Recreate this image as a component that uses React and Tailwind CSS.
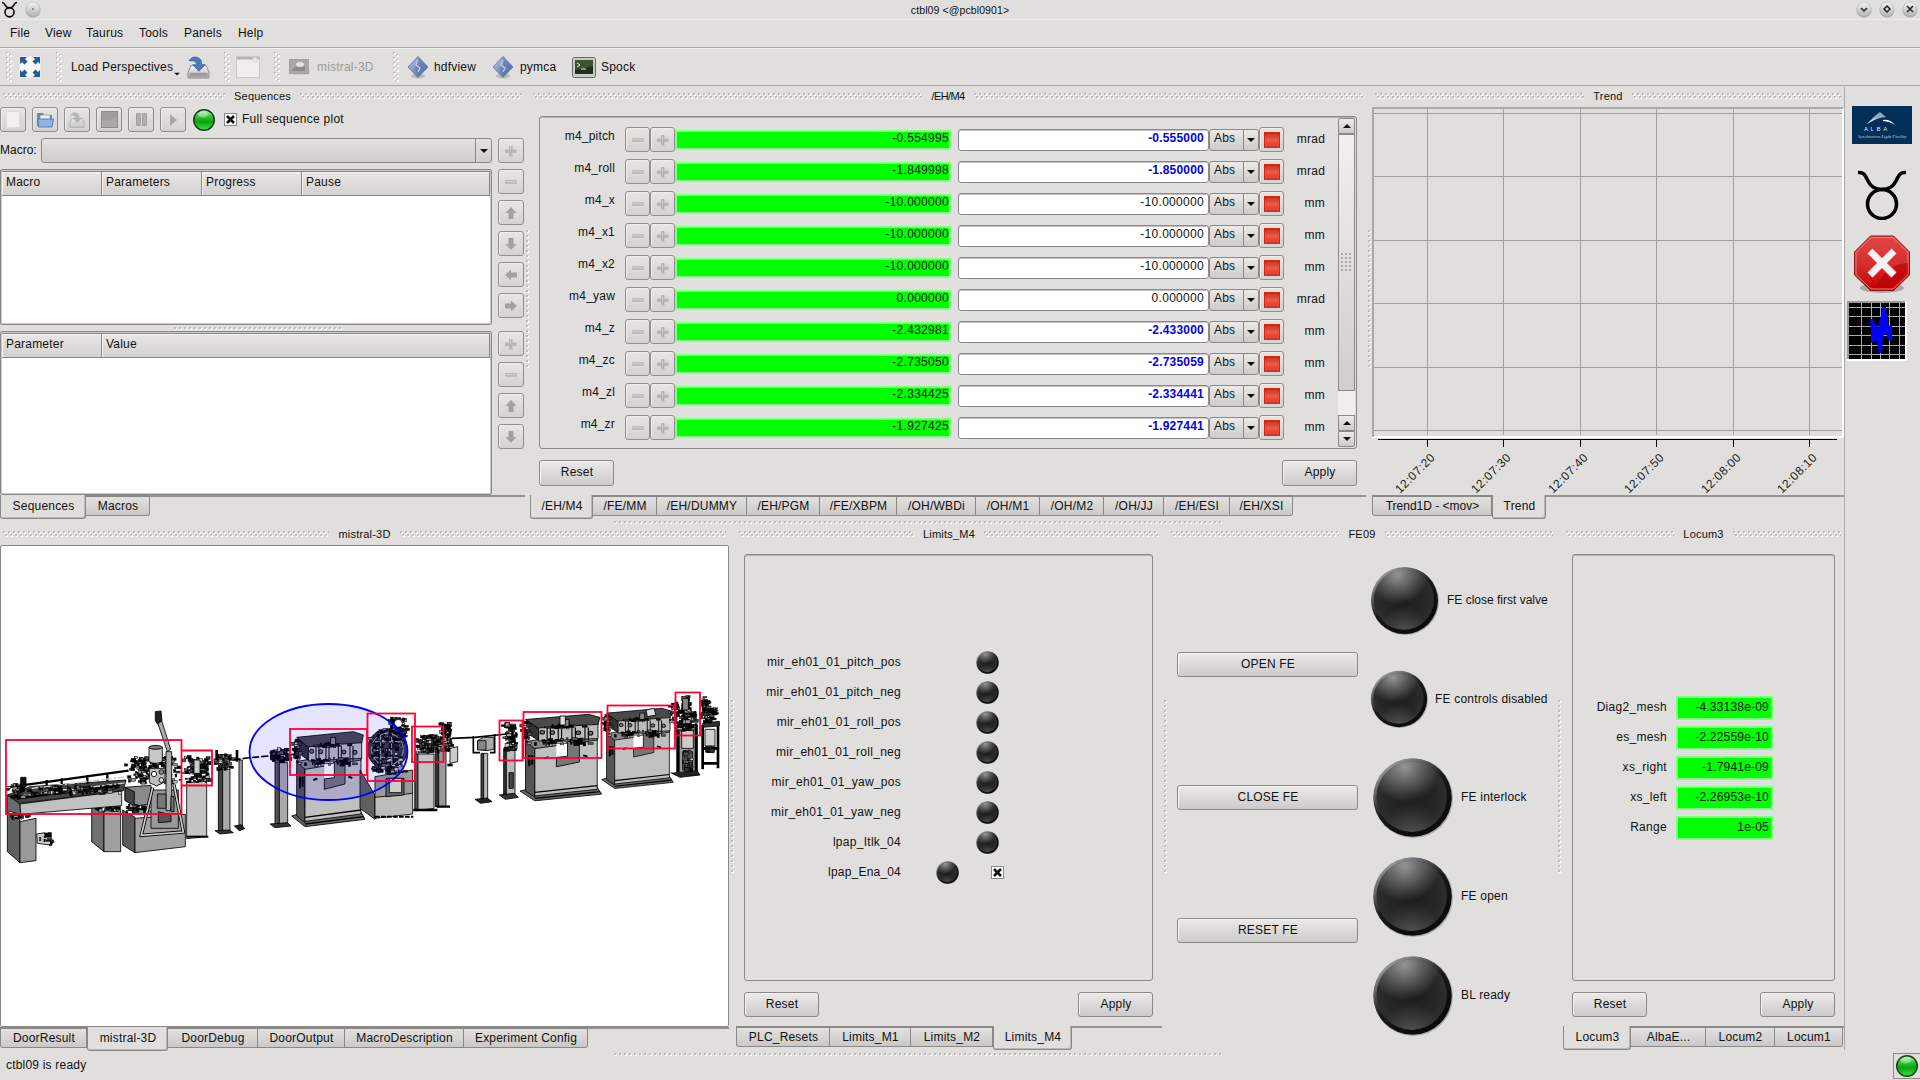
import React from "react";

/* ---------- shared patterns ---------- */
function Patterns() {
  return (
    <svg width="0" height="0" className="absolute">
      <defs>
        <pattern id="zig" width="5" height="6" patternUnits="userSpaceOnUse">
          <rect x="0" y="0" width="2" height="2" fill="#bab9b7" />
          <rect x="1" y="1" width="2" height="2" fill="#fff" />
          <rect x="1" y="1" width="1" height="1" fill="#d0cfcd" />
          <rect x="2" y="3" width="2" height="2" fill="#bab9b7" />
          <rect x="3" y="4" width="2" height="2" fill="#fff" />
          <rect x="3" y="4" width="1" height="1" fill="#d0cfcd" />
        </pattern>
        <pattern id="dot" width="5" height="5" patternUnits="userSpaceOnUse">
          <rect x="0" y="0" width="2" height="2" fill="#bab9b7" />
          <rect x="1" y="1" width="2" height="2" fill="#fff" />
          <rect x="1" y="1" width="1" height="1" fill="#c6c5c3" />
        </pattern>
        <pattern id="grip" width="6" height="5" patternUnits="userSpaceOnUse">
          <rect x="0" y="0" width="2" height="2" fill="#c2c1bf" />
          <rect x="1" y="1" width="2" height="2" fill="#fff" />
          <rect x="3" y="2" width="2" height="2" fill="#c2c1bf" />
          <rect x="4" y="3" width="2" height="2" fill="#fff" />
        </pattern>
        <radialGradient id="ledDark" cx="0.5" cy="0.5" r="0.5">
          <stop offset="0" stopColor="#1c1c1c" />
          <stop offset="0.7" stopColor="#262626" />
          <stop offset="1" stopColor="#2e2e2e" />
        </radialGradient>
        <radialGradient id="ledShine" cx="0.4" cy="0.08" r="0.5">
          <stop offset="0" stopColor="#fff" stopOpacity="0.5" />
          <stop offset="1" stopColor="#fff" stopOpacity="0" />
        </radialGradient>
        <radialGradient id="ledLow" cx="0.5" cy="1" r="0.4">
          <stop offset="0" stopColor="#fff" stopOpacity="0.16" />
          <stop offset="1" stopColor="#fff" stopOpacity="0" />
        </radialGradient>
        <linearGradient id="ledRim" x1="0.15" y1="0" x2="0.7" y2="0.8">
          <stop offset="0" stopColor="#b4b4b6" />
          <stop offset="0.35" stopColor="#55565a" />
          <stop offset="0.6" stopColor="#1a1a1a" />
          <stop offset="1" stopColor="#0c0c0c" />
        </linearGradient>
        <linearGradient id="green" x1="0" y1="0" x2="0" y2="1">
          <stop offset="0" stopColor="#b6f5b6" />
          <stop offset="0.3" stopColor="#2fc92f" />
          <stop offset="0.6" stopColor="#0f9f14" />
          <stop offset="1" stopColor="#2fe43a" />
        </linearGradient>
        <linearGradient id="diamond" x1="0" y1="0" x2="1" y2="1">
          <stop offset="0" stopColor="#c3d0e8" />
          <stop offset="0.5" stopColor="#7d92c4" />
          <stop offset="1" stopColor="#4c639c" />
        </linearGradient>
        <linearGradient id="metal" x1="0" y1="0" x2="0" y2="1">
          <stop offset="0" stopColor="#f4f4f4" />
          <stop offset="1" stopColor="#b5b5b5" />
        </linearGradient>
        <linearGradient id="octa" x1="0" y1="0" x2="0" y2="1">
          <stop offset="0" stopColor="#e04848" />
          <stop offset="0.5" stopColor="#d52f2f" />
          <stop offset="1" stopColor="#c40000" />
        </linearGradient>
      </defs>
    </svg>
  );
}

function Fill({ id, className }) {
  return (
    <svg className={className}>
      <rect width="100%" height="100%" fill={`url(#${id})`} />
    </svg>
  );
}

function VSplit({ className, dots }) {
  return (
    <div className={`flex shrink-0 justify-center ${className}`}>
      <Fill id="dot" className={dots} />
    </div>
  );
}

const GRAD = "bg-linear-to-b from-[#ebeae9] to-[#cccbc9]";
const EDGE = "border border-[#8a8988]";

function Title({ children, textClass = "" }) {
  return (
    <div className="flex h-[18px] shrink-0 items-center gap-[9px] px-[3px]">
      <Fill id="zig" className="h-[6px] min-w-0 flex-1" />
      <span className={`text-[11px] leading-[14px] ${textClass}`}>{children}</span>
      <Fill id="zig" className="h-[6px] min-w-0 flex-1" />
    </div>
  );
}

function PushButton({ children, className = "h-[25px] w-[75px]" }) {
  return (
    <button className={`flex shrink-0 items-center justify-center rounded-[3px] ${EDGE} ${GRAD} pb-[1px] pl-[1px] text-[12px] shadow-[inset_1px_1px_0_#f6f5f4] ${className}`}>
      {children}
    </button>
  );
}

function SmallButton({ children, className = "w-[26px]" }) {
  return (
    <button className={`flex h-[25px] shrink-0 items-center justify-center rounded-[3px] border border-[#8f8e8d] bg-linear-to-b from-[#e6e5e4] to-[#d4d3d1] shadow-[inset_1px_1px_0_#eeedec] ${className}`}>
      {children}
    </button>
  );
}

const Minus = () => (
  <svg width="12" height="12" viewBox="0 0 12 12">
    <rect x="0" y="4" width="12" height="4" rx="1" fill="#bdbcbb" />
    <rect x="1" y="5" width="10" height="1" fill="#cfcecd" />
  </svg>
);
const Plus = () => (
  <svg width="12" height="12" viewBox="0 0 12 12">
    <path d="M4 1h3.500v3.500h4v3.500h-4v3.500h-3.500v-3.500h-4v-3.500h4z" fill="#b7b6b5" />
    <path d="M5 2h1v4h-1z" fill="#cfcecd" />
  </svg>
);
function Arrow({ turn = "" }) {
  return (
    <svg width="14" height="14" viewBox="0 0 14 14" className={turn}>
      <path d="M7 1 12.500 7H9.500V13H4.500V7H1.500Z" fill="#a2a1a0" />
    </svg>
  );
}
const Caret = ({ up }) => (
  <svg width="8" height="4" viewBox="0 0 8 4" className="shrink-0">
    <path d={up ? "M0 4 4 0 8 4Z" : "M0 0H8L4 4Z"} fill="#111" />
  </svg>
);

function Check() {
  return (
    <span className="flex size-[13px] shrink-0 items-center justify-center border border-[#8a8988] bg-white">
      <svg width="9" height="9" viewBox="0 0 9 9">
        <path d="M1 1 8 8M8 1 1 8" stroke="#111" strokeWidth="2.600" />
      </svg>
    </span>
  );
}

function GreenLed() {
  return (
    <svg width="22" height="22" viewBox="0 0 22 22" className="shrink-0">
      <circle cx="11" cy="11" r="11" fill="#1d3a1d" />
      <circle cx="11" cy="11" r="9.500" fill="url(#green)" />
      <ellipse cx="10" cy="5.500" rx="5" ry="3" fill="#fff" opacity="0.35" />
    </svg>
  );
}

function DarkLed({ className }) {
  return (
    <svg viewBox="0 0 100 100" className={`shrink-0 ${className}`}>
      <circle cx="51" cy="51" r="49" fill="#777" opacity="0.5" />
      <circle cx="50" cy="50" r="48.500" fill="url(#ledRim)" />
      <circle cx="49" cy="49" r="43.500" fill="url(#ledDark)" />
      <circle cx="49" cy="49" r="43.500" fill="url(#ledShine)" />
      <circle cx="49" cy="49" r="43.500" fill="url(#ledLow)" />
    </svg>
  );
}

/* ---------- tabs ---------- */
function Tabs({ items, active }) {
  const at = items.findIndex((t) => t[0] === active);
  return (
    <div className="flex h-[24px] shrink-0 items-start text-[12px]">
      {items.map(([name, w], i) =>
        i === at ? (
          <div key={name} className={`flex h-[24px] shrink-0 items-center justify-center rounded-b-[3px] border-x border-b border-[#8a8988] pb-[1px] pl-[1px] shadow-[inset_-1px_-1px_0_#b9b8b6] ${w}`}>
            {name}
          </div>
        ) : (
          <div key={name} className={`flex h-[21px] shrink-0 items-center justify-center border-t-2 border-r border-b border-[#8a8988] bg-linear-to-b from-[#e2e1e0] to-[#cac9c7] pt-[1px] pl-[1px] ${i === 0 ? "rounded-bl-[3px] border-l" : ""} ${i === items.length - 1 ? "rounded-br-[3px]" : ""} ${w}`}>
            {name}
          </div>
        )
      )}
      <div className="h-[2px] flex-1 bg-[#959493]" />
    </div>
  );
}

/* ---------- toolbar icons ---------- */
const FullIcon = () => (
  <svg width="22" height="22" viewBox="0 0 22 22">
    <rect x="0.500" y="0.500" width="21" height="21" fill="#f6f8fb" stroke="#e8e8e8" />
    <path d="M1 1h7l-2 2 2.500 2.500-3 3L3 6 1 8zM21 1v7l-2-2-2.500 2.500-3-3L16 3l-2-2zM1 21v-7l2 2 2.500-2.500 3 3L6 19l2 2zM21 21h-7l2-2-2.500-2.500 3-3L19 16l2-2z" fill="#2a5796" />
  </svg>
);
const SaveIcon = ({ gray, className }) => (
  <svg viewBox="0 0 24 24" className={className}>
    <path d="M4 10h16l3 7v5q0 1-1 1H2q-1 0-1-1v-5z" fill="url(#metal)" stroke="#8c8c8c" />
    <rect x="2.500" y="17.500" width="19" height="4" fill={gray ? "#cfcfcf" : "#9c9c9c"} />
    <path d="M2 5Q6 -1 12 2Q16 4 15 9H19L12.500 16 6 9h4Q10 4 2 5Z" fill={gray ? "#a5a5a5" : "#4c7cb8"} stroke={gray ? "#999" : "#2d5a94"} strokeWidth="0.700" />
  </svg>
);
const Diamond = () => (
  <svg width="22" height="23" viewBox="0 0 22 23">
    <ellipse cx="11" cy="20" rx="7" ry="2.500" fill="#bbb" />
    <path d="M11 0.500 21 11 11 21.500 1 11Z" fill="url(#diamond)" stroke="#6c7fa9" />
    <path d="M11 1 21 11 11 21 8 13Z" fill="#5d72a8" opacity="0.5" />
    <path d="M11 4 9 9 13 12 11 16" stroke="#c4d0e8" strokeWidth="1.200" fill="none" />
  </svg>
);
const TermIcon = () => (
  <svg width="24" height="21" viewBox="0 0 24 21">
    <rect x="0.500" y="0.500" width="23" height="20" rx="2" fill="#c9cac7" stroke="#6a6c68" />
    <rect x="3" y="3" width="18" height="14" fill="#1e3016" />
    <path d="M3 3h18v6L3 13z" fill="#3b5531" />
    <path d="M5 6l3 2-3 2M9 12h5" stroke="#e4f2dc" fill="none" />
  </svg>
);
const WindowIcon = () => (
  <svg width="24" height="22" viewBox="0 0 24 22">
    <rect x="0.500" y="0.500" width="23" height="21" fill="#efeeed" stroke="#cccbca" />
    <rect x="1" y="1" width="22" height="2.500" fill="#b3b2b1" />
    <circle cx="19" cy="4" r="2.500" fill="#e9e8e8" stroke="#dadada" />
  </svg>
);
const ImageIcon = () => (
  <svg width="22" height="18" viewBox="0 0 22 18">
    <path d="M4 15 21 12V16L18 17H4z" fill="#cfcecd" />
    <rect x="0.500" y="1.500" width="19" height="14" fill="#a9a8a7" stroke="#a3a2a1" />
    <path d="M3 11 8 8 16 8V13H3z" fill="#8d8c8b" />
    <ellipse cx="11" cy="6.500" rx="4" ry="2.500" fill="#e6e6e6" />
  </svg>
);
const Taurus = ({ className, w = 3 }) => (
  <svg viewBox="0 0 48 50" className={className} fill="none" stroke="#000" strokeWidth={w}>
    <circle cx="24" cy="34" r="14.500" />
    <path d="M0 2.500C6 2 7 5 10 11C13 17 17 19.500 24 19.500C31 19.500 35 17 38 11C41 5 42 2 48 2.500" />
  </svg>
);
const Grip = ({ className }) => <Fill id="grip" className={`h-[30px] w-[6px] shrink-0 ${className}`} />;

function WinDot({ children }) {
  return (
    <svg width="16" height="17" viewBox="0 0 16 17">
      <circle cx="8" cy="9" r="7.500" fill="#a9a8a6" />
      <circle cx="8" cy="8" r="7" fill="url(#metal)" stroke="#bbb" strokeWidth="0.600" />
      {children}
    </svg>
  );
}

/* ---------- header bars ---------- */
function Header() {
  return (
    <>
      <div className="grid h-[20px] shrink-0 grid-cols-3 items-center border-b border-[#f0efee]">
        <div className="flex items-center gap-[8px] pl-[2px]">
          <Taurus className="h-[17px] w-[15px]" w={5} />
          <WinDot><circle cx="8" cy="8" r="1" fill="#777" /></WinDot>
        </div>
        <div className="text-center text-[10.500px] leading-[14px] tracking-[0.1px]">{"ctbl09 <@pcbl0901>"}</div>
        <div className="flex justify-end gap-[7px] pr-[2px]">
          <WinDot><path d="M5 7l3 3 3-3" stroke="#222" strokeWidth="1.500" fill="none" /></WinDot>
          <WinDot><path d="M8 5l3 3-3 3-3-3z" stroke="#222" strokeWidth="1.500" fill="none" /></WinDot>
          <WinDot><path d="M5 5l6 6M11 5l-6 6" stroke="#222" strokeWidth="1.500" fill="none" /></WinDot>
        </div>
      </div>
      <div className="flex h-[28px] shrink-0 items-center border-b border-[#a9a8a6] pl-[10px]">
        <span className="w-[35px]">File</span>
        <span className="w-[41px]">View</span>
        <span className="w-[53px]">Taurus</span>
        <span className="w-[45px]">Tools</span>
        <span className="w-[54px]">Panels</span>
        <span>Help</span>
      </div>
      <div className="flex h-[38px] shrink-0 items-center border-t border-b border-t-[#f2f1f0] border-b-[#a9a8a6]">
        <Grip className="ml-[6px]" />
        <span className="ml-[7px]"><FullIcon /></span>
        <Grip className="ml-[15px]" />
        <span className="ml-[9px] w-[103px] tracking-[0.2px]">Load Perspectives</span>
        <span className="mt-[14px] -ml-[1px] scale-75"><Caret /></span>
        <SaveIcon className="ml-[6px] size-[23px]" />
        <Grip className="ml-[14px]" />
        <span className="ml-[6px]"><WindowIcon /></span>
        <Grip className="ml-[14px]" />
        <span className="ml-[9px]"><ImageIcon /></span>
        <span className="ml-[6px] w-[76px] text-[#9b9a99]">mistral-3D</span>
        <Grip className="" />
        <span className="ml-[8px]"><Diamond /></span>
        <span className="ml-[5px] w-[58px]">hdfview</span>
        <Diamond />
        <span className="ml-[6px] w-[52px]">pymca</span>
        <TermIcon />
        <span className="ml-[5px]">Spock</span>
      </div>
    </>
  );
}

/* ---------- sequences dock ---------- */
function Table({ cols, className }) {
  return (
    <div className={`flex shrink-0 flex-col rounded-[2px] border border-[#8a8988] bg-white p-px shadow-[inset_0_0_0_1px_#c9c8c7] ${className}`}>
      <div className="flex h-[25px] border-t border-[#8a8988] text-[12px]">
        {cols.map(([n, w]) => (
          <div key={n} className={`flex items-center border-r border-b border-[#8a8988] bg-linear-to-b from-[#e8e7e6] to-[#d3d2d0] pb-[3px] pl-[4px] shadow-[inset_1px_1px_0_#f3f2f1] ${w}`}>
            {n}
          </div>
        ))}
      </div>
    </div>
  );
}

function Sequences() {
  return (
    <div className="flex w-[525px] shrink-0 flex-col">
      <Title>Sequences</Title>
      <div className="mt-[2px] flex h-[25px] shrink-0 items-center">
        <div className="flex gap-[6px]">
          <SmallButton>
            <svg width="14" height="17"><path d="M0.500 0.500H13.500V16.500H0.500Z" fill="#f1f0ef" stroke="#dddcdb" /></svg>
          </SmallButton>
          <SmallButton>
            <svg width="18" height="16" viewBox="0 0 18 16">
              <path d="M1 14V1h6l1 2h8v11z" fill="#6f87a8" />
              <path d="M4 3h10v6H4z" fill="#ededed" stroke="#888" strokeWidth="0.600" />
              <path d="M2 7h15.500L16 15H2.500z" fill="#8fb4df" stroke="#4473aa" strokeWidth="0.800" />
            </svg>
          </SmallButton>
          <SmallButton><SaveIcon gray className="size-[16px] opacity-70" /></SmallButton>
          <SmallButton>
            <svg width="17" height="17"><rect x="0.500" y="0.500" width="16" height="16" fill="#9f9e9d" stroke="#8b8a89" /><path d="M1 16V9Q9 11 16 5V16z" fill="#aaa9a8" /></svg>
          </SmallButton>
          <SmallButton>
            <svg width="11" height="13"><path d="M0.500 0.500H4.500V12.500H0.500ZM6.500 0.500H10.500V12.500H6.500Z" fill="#b0afae" stroke="#a3a2a1" /></svg>
          </SmallButton>
          <SmallButton>
            <svg width="8" height="12"><path d="M1 0 8 6 1 12Z" fill="#a9a8a7" /></svg>
          </SmallButton>
        </div>
        <div className="ml-[7px]"><GreenLed /></div>
        <div className="ml-[9px]"><Check /></div>
        <span className="ml-[5px] tracking-[0.25px]">Full sequence plot</span>
      </div>
      <div className="mt-[6px] flex h-[25px] shrink-0 items-center">
        <span className="w-[41px] tracking-[0px]">Macro:</span>
        <div className={`flex h-[25px] w-[451px] items-stretch rounded-[3px] ${EDGE} bg-linear-to-b from-[#e3e2e1] to-[#cecdcb]`}>
          <div className="flex-1 border-r border-[#8a8988]" />
          <div className="flex w-[15px] items-center justify-center"><Caret /></div>
        </div>
        <div className="ml-[6px]"><SmallButton><Plus /></SmallButton></div>
      </div>
      <div className="mt-[6px] flex h-[156px] shrink-0">
        <Table className="h-[156px] w-[492px]" cols={[["Macro", "w-[100px]"], ["Parameters", "w-[100px]"], ["Progress", "w-[100px]"], ["Pause", "flex-1"]]} />
        <div className="ml-[6px] flex flex-col gap-[6px]">
          <SmallButton><Minus /></SmallButton>
          <SmallButton><Arrow /></SmallButton>
          <SmallButton><Arrow turn="rotate-180" /></SmallButton>
          <SmallButton><Arrow turn="-rotate-90" /></SmallButton>
          <SmallButton><Arrow turn="rotate-90" /></SmallButton>
        </div>
      </div>
      <div className="flex h-[6px] shrink-0 items-center pl-[174px]">
        <Fill id="dot" className="h-[3px] w-[168px]" />
      </div>
      <div className="flex h-[164px] shrink-0">
        <Table className="h-[164px] w-[492px]" cols={[["Parameter", "w-[100px]"], ["Value", "flex-1"]]} />
        <div className="ml-[6px] flex flex-col gap-[6px]">
          <SmallButton><Plus /></SmallButton>
          <SmallButton><Minus /></SmallButton>
          <SmallButton><Arrow /></SmallButton>
          <SmallButton><Arrow turn="rotate-180" /></SmallButton>
        </div>
      </div>
      <Tabs items={[["Sequences", "w-[86px]"], ["Macros", "w-[64px]"]]} active="Sequences" />
    </div>
  );
}

/* ---------- motors dock ---------- */
const MOTORS = [
  ["m4_pitch", "-0.554995", "-0.555000", "mrad", true],
  ["m4_roll", "-1.849998", "-1.850000", "mrad", true],
  ["m4_x", "-10.000000", "-10.000000", "mm", false],
  ["m4_x1", "-10.000000", "-10.000000", "mm", false],
  ["m4_x2", "-10.000000", "-10.000000", "mm", false],
  ["m4_yaw", "0.000000", "0.000000", "mrad", false],
  ["m4_z", "-2.432981", "-2.433000", "mm", true],
  ["m4_zc", "-2.735050", "-2.735059", "mm", true],
  ["m4_zl", "-2.334425", "-2.334441", "mm", true],
  ["m4_zr", "-1.927425", "-1.927441", "mm", true],
];

function Motors() {
  return (
    <div className="flex w-[836px] shrink-0 flex-col">
      <Title textClass="tracking-[-0.6px]">/EH/M4</Title>
      <div className="ml-[9px] mt-[11px] flex h-[333px] w-[818px] shrink-0 rounded-[3px] border border-[#8a8988] shadow-[inset_0_1px_0_#b5b4b2]">
        <div className="flex flex-1 flex-col gap-[7px] pt-[10px]">
          {MOTORS.map(([n, r, w, u, dirty]) => (
            <div key={n} className="flex h-[25px] shrink-0 items-center">
              <span className="w-[75px] pb-[6px] text-right">{n}</span>
              <div className="ml-[10px] flex">
                <SmallButton className="w-[25px]"><Minus /></SmallButton>
                <SmallButton className="w-[25px]"><Plus /></SmallButton>
              </div>
              <div className="flex h-[20px] w-[276px] items-center justify-end border-2 border-[#80ff80] bg-[#00ff00] pb-[2px] tracking-[0.300px]">{r}</div>
              <div className={`ml-[7px] flex h-[22px] w-[251px] items-center justify-end rounded-[3px] border border-[#8a8988] bg-white pb-[2px] pr-[4px] shadow-[inset_0_1px_0_#c5c4c3] ${dirty ? "font-bold text-[#0000f0]" : "tracking-[0.300px]"}`}>{w}</div>
              <div className={`flex h-[22px] w-[50px] items-stretch rounded-[3px] ${EDGE} ${GRAD}`}>
                <span className="flex w-[34px] items-center border-r border-[#8a8988] pb-[2px] pl-[4px]">Abs</span>
                <span className="flex flex-1 items-center justify-center"><Caret /></span>
              </div>
              <SmallButton className="w-[25px]">
                <span className="size-[16px] border border-[#d4231b] bg-linear-to-b from-[#c43200] via-[#ee5a42] to-[#dc3a20]" />
              </SmallButton>
              <span className="w-[41px] pb-[1px] text-right">{u}</span>
            </div>
          ))}
        </div>
        <div className="mr-[1px] mt-[1px] flex h-[329px] w-[17px] flex-col">
          <div className={`flex h-[16px] items-center justify-center rounded-t-[2px] ${EDGE} ${GRAD}`}><Caret up /></div>
          <div className="flex h-[257px] items-center justify-center border border-[#8a8988] bg-linear-to-b from-[#f1f0ef] to-[#cfcecc]">
            <svg width="11" height="20">
              {[0, 4, 8].map((x) => [0, 4, 8, 12, 16].map((y) => <rect key={`${x}-${y}`} x={x} y={y} width="2" height="2" fill="#aaa9a8" />))}
            </svg>
          </div>
          <div className="flex-1 bg-[#efeeed]" />
          <div className={`flex h-[16px] items-center justify-center ${EDGE} ${GRAD}`}><Caret up /></div>
          <div className={`flex h-[16px] items-center justify-center rounded-b-[2px] ${EDGE} ${GRAD}`}><Caret /></div>
        </div>
      </div>
      <div className="ml-[9px] mt-[11px] flex w-[818px] flex-1 justify-between">
        <PushButton className="h-[26px] w-[75px]">Reset</PushButton>
        <PushButton className="h-[26px] w-[75px]">Apply</PushButton>
      </div>
      <Tabs
        active="/EH/M4"
        items={[["/EH/M4", "w-[63px]"], ["/FE/MM", "w-[64px]"], ["/EH/DUMMY", "w-[90px]"], ["/EH/PGM", "w-[73px]"], ["/FE/XBPM", "w-[77px]"], ["/OH/WBDi", "w-[79px]"], ["/OH/M1", "w-[64px]"], ["/OH/M2", "w-[64px]"], ["/OH/JJ", "w-[60px]"], ["/EH/ESI", "w-[66px]"], ["/EH/XSI", "w-[63px]"]]}
      />
    </div>
  );
}

/* ---------- trend dock ---------- */
function Trend() {
  const xs = [[55, "12:07:20"], [131, "12:07:30"], [208, "12:07:40"], [284, "12:07:50"], [361, "12:08:00"], [437, "12:08:10"]];
  return (
    <div className="flex w-[472px] shrink-0 flex-col">
      <Title>Trend</Title>
      <svg width="472" height="388" className="mt-[2px] shrink-0">
        <path d="M471 1V330H0" stroke="#fff" strokeWidth="2" fill="none" />
        <path d="M1 330V1H471" stroke="#a9a8a7" strokeWidth="2" fill="none" />
        {xs.map(([x, t]) => (
          <g key={t}>
            <rect x={x} y="2" width="1" height="326" fill="#a0a0a4" />
            <rect x={x} y="332" width="1" height="8" fill="#000" />
            <text transform={`translate(${x - 27} 387) rotate(-45)`} className="text-[12px]" fill="#222" letterSpacing="0.5">{t}</text>
          </g>
        ))}
        {[6, 69, 133, 196, 260, 323].map((y) => (
          <rect key={y} x="2" y={y} width="468" height="1" fill="#a0a0a4" />
        ))}
        <rect x="6" y="332" width="459" height="1" fill="#000" />
      </svg>
      <Tabs active="Trend" items={[["Trend1D - <mov>", "w-[120px] tracking-[0px]"], ["Trend", "w-[54px]"]]} />
    </div>
  );
}

/* ---------- beamline synoptic ---------- */
function clutter(x, y, w, h, n, seed) {
  let s = seed * 7919 + 17;
  const rnd = () => ((s = (s * 1103515245 + 12345) % 2147483648) / 2147483648);
  const tones = ["#000", "#111", "#000", "#333", "#555", "#999", "#ccc", "#000"];
  return Array.from({ length: n }, (_, i) => {
    const cx = x + w * (0.5 + (rnd() - 0.5) * (0.5 + rnd() * 0.5));
    const cy = y + h * rnd();
    const a = 3 + rnd() * 12;
    const b = 3 + rnd() * 8;
    return <rect key={i} x={cx - a / 2} y={cy - b / 2} width={a} height={b} fill={tones[Math.floor(rnd() * 8)]} stroke="#000" strokeWidth="1.500" />;
  });
}

function Magnet({ transform }) {
  return (
    <g transform={transform}>
      <path d="M875 408 915 440 1095 418 1083 396 900 400Z" fill="#666" />
      <path d="M890 240 915 262V428L890 408Z" fill="#555" />
      <path d="M915 262 1083 235V402L915 424Z" fill="#c0c0c0" />
      <path d="M890 245 925 238 1083 228V240L915 268Z" fill="#888" />
      <path d="M973 252H1003V295H973Z" fill="#fff" stroke="none" />
      <path d="M1003 245 1035 240V312L973 328V297L1003 293Z" fill="#777" />
      <path d="M915 412 1083 390M915 432 1090 410" fill="none" strokeWidth="4" />
      <path d="M890 172 1060 155 1090 165 1085 190 925 202Z" fill="#4a4a4a" />
      <path d="M925 200 1085 188V235L925 243Z" fill="#bcbcbc" />
      {[948, 978, 1015, 1050].map((x) => (
        <path key={x} d={`M${x} 198V242M${x + 9} 198V242`} fill="none" strokeWidth="3" />
      ))}
      {[935, 962, 1032, 1065].map((x, i) => (
        <circle key={x} cx={x} cy={214 + i} r="6" fill="#777" strokeWidth="3" />
      ))}
      <path d="M892 176V215L910 230 925 240V202Z" fill="#333" />
      {clutter(895, 235, 185, 22, 42, 5)}
      {clutter(875, 180, 30, 60, 26, 8)}
      {clutter(900, 192, 185, 8, 24, 9)}
      <path d="M940 300l12 -4M1045 290l12 4M900 290v35M908 290v30" strokeWidth="6" />
      <rect x="992" y="172" width="15" height="22" fill="#888" />
    </g>
  );
}

function Synoptic() {
  return (
    <svg width="727" height="479" viewBox="1 546 727 479">
      <g stroke="#000" strokeWidth="2.500" transform="translate(0 680) scale(0.33333)">
        {/* girder with end pedestals */}
        <path d="M22 395 60 420V548L22 515Z" fill="#606060" />
        <path d="M60 425 108 415V542L60 548Z" fill="#999" />
        {clutter(28, 402, 78, 14, 30, 1)}
        <path d="M110 462 135 458 155 475 150 495 112 490Z" fill="#ccc" />
        {clutter(118, 462, 44, 34, 16, 2)}
        <path d="M275 380 312 395V515L275 485Z" fill="#707070" />
        <path d="M312 392 362 388V515H312Z" fill="#a0a0a0" />
        {clutter(280, 380, 90, 12, 24, 3)}
        <path d="M22 345 60 372 62 403 22 392Z" fill="#6b6b6b" />
        <path d="M60 372 365 333V377L62 403Z" fill="#c0c0c0" />
        <path d="M22 345 90 320 378 300 370 332 60 370Z" fill="#444" />
        <path d="M22 322 385 272M140 300V325M185 295V318M262 285V312M322 278V304M50 356 360 315" strokeWidth="7" fill="none" />
        <path d="M60 348 380 308M95 325 380 290" stroke="#ccc" strokeWidth="4" strokeDasharray="20 6 7 4" />
        {clutter(22, 312, 60, 40, 32, 4)}
        <path d="M62 292H78V320H62Z" fill="#111" />
        {clutter(60, 330, 310, 12, 44, 14)}
        {clutter(110, 318, 270, 12, 36, 15)}
        {/* first mirror chamber */}
        <path d="M368 390 405 412V518L368 495Z" fill="#5c5c5c" />
        <path d="M405 415 556 403V500L405 518Z" fill="#a3a3a3" />
        <path d="M375 322 453 316V372L405 378 375 360Z" fill="#8a8a8a" />
        <path d="M375 322 403 335V378L375 362Z" fill="#444" />
        {clutter(380, 376, 70, 22, 36, 6)}
        <path d="M453 330H535V445H453Z" fill="#999" />
        <path d="M475 395 513 405V425L475 428Z" fill="#555" />
        <path d="M458 322 424 466 550 456 522 314" stroke="#000" strokeWidth="10" fill="none" />
        <path d="M458 322 424 466 550 456 522 314" stroke="#d0d0d0" strokeWidth="5" fill="none" />
        {clutter(375, 232, 170, 78, 190, 7)}
        <path d="M448 265H495V305L470 318 448 308Z" fill="#bbb" />
        <circle cx="462" cy="282" r="8" fill="#fff" /><circle cx="484" cy="276" r="7" fill="#888" /><circle cx="484" cy="300" r="7" fill="#ddd" />
        <path d="M447 202V245Q466 255 487 245V202Z" fill="#c8c8c8" />
        <ellipse cx="467" cy="202" rx="20" ry="6" fill="#777" />
        <path d="M472 125 485 122 512 208 502 215Z" fill="#aaa" />
        <path d="M466 95 483 93 486 122 472 132 466 122Z" fill="#222" />
        <path d="M498 215H515V340L512 392H498Z" fill="#b0b0b0" />
        <path d="M472 342H498V385H472ZM513 348 522 350V395H513Z" fill="#777" />
        {/* cabinet */}
        <path d="M560 308 620 304V470L560 476Z" fill="#c4c4c4" />
        {clutter(548, 228, 88, 78, 115, 11)}
        <path d="M582 240H600V280H582Z" fill="#ccc" />
        <path d="M560 470H625" strokeWidth="6" />
        {/* posts */}
        <path d="M655 268H668V455H655Z" fill="#444" />
        <path d="M668 268H690V455H668Z" fill="#aaa" />
        <path d="M645 452 660 462 700 458 688 450Z" fill="#333" />
        {clutter(642, 225, 60, 42, 70, 12)}
        <path d="M650 210V240" strokeWidth="8" />
        <path d="M717 240H727V440H717Z" fill="#999" /><path d="M703 438 718 452 734 446 724 434Z" fill="#222" />
        <path d="M711 210V245" strokeWidth="8" />
        <path d="M700 240 740 234 805 228 900 222" fill="none" strokeWidth="5" strokeDasharray="22 6" />
        <path d="M825 245H838V432H825Z" fill="#555" /><path d="M838 248H863V432H838Z" fill="#aaa" />
        <path d="M810 432 825 443 873 438 862 428Z" fill="#333" />
        <path d="M812 212 850 208 862 220V240H812Z" fill="#222" />
        {clutter(805, 208, 68, 36, 55, 13)}
        <Magnet />
      </g>
      <g stroke="#000" strokeWidth="2.500" transform="translate(360 680) scale(0.33333)">
        <path d="M0 270 45 345V418L0 385Z" fill="#606060" />
        <path d="M45 350 158 338V402L45 415Z" fill="#bdbdbd" />
        <path d="M45 290 158 270V340L45 352Z" fill="#999" />
        <path d="M78 295H132V345L78 350Z" fill="#666" /><path d="M88 295H125V338H88Z" fill="#ccc" />
        <circle cx="82" cy="208" r="60" fill="#3a3a3a" />
        {clutter(22, 150, 118, 130, 210, 21)}
        {clutter(80, 115, 70, 55, 60, 22)}
        <circle cx="115" cy="130" r="12" fill="#fff" />
        <g fill="none" stroke="#aaa" strokeWidth="3">
          <circle cx="82" cy="208" r="48" strokeDasharray="22 12" />
          <path d="M45 185H125M42 232H122M62 165V250M95 170V255" strokeDasharray="14 6" />
        </g>
        <path d="M45 410H160" strokeWidth="6" strokeDasharray="14 4" />
        <path d="M165 222H222V385L165 392Z" fill="#c4c4c4" /><path d="M165 222H174V392H165Z" fill="#555" />
        <path d="M226 212H236V380H226Z" fill="#333" /><path d="M236 212H258V380H236Z" fill="#999" />
        <path d="M160 390H232M230 380H270" strokeWidth="7" />
        {clutter(165, 168, 85, 50, 100, 23)}
        {clutter(242, 128, 36, 85, 70, 24)}
        <path d="M270 205 293 200V245L270 250Z" fill="#ccc" />
        <path d="M262 255H278" strokeWidth="8" />
        <path d="M275 175 345 172 440 162" fill="none" strokeWidth="5" />
        <path d="M340 168V218H360M404 162V218H390" fill="none" strokeWidth="5" />
        <path d="M353 182 370 172H402V208L380 212 353 208Z" fill="#aaa" /><path d="M353 182H378V210H353Z" fill="#888" />
        <path d="M363 220H371V358H363Z" fill="#444" /><path d="M371 220H383V358H371Z" fill="#bbb" />
        <path d="M345 358 362 370 396 365 382 354Z" fill="#222" />
        <path d="M437 210H465V350H437Z" fill="#bbb" /><path d="M431 205H439V348H431Z" fill="#333" /><path d="M447 278H460V325H447Z" fill="#444" />
        <path d="M418 345 436 358 475 352 462 340Z" fill="#333" />
        {clutter(428, 132, 46, 78, 85, 25)}
        <Magnet transform="translate(480 103) scale(1.114 0.91) translate(-875 -155)" />
        <Magnet transform="translate(725 85) scale(0.977 0.844) translate(-875 -155)" />
        <path d="M600 108H616V135H600ZM858 90 882 85 888 105 862 110Z" fill="#ddd" />
        {clutter(928, 70, 30, 60, 30, 33)}
        <path d="M950 135H1012V285H950Z" fill="#999" /><path d="M965 150H1000V205H965Z" fill="#ccc" />
        <path d="M968 215H998V270H968Z" fill="#555" />
        <path d="M955 130V280M1008 130V280" strokeWidth="8" />
        <path d="M932 278 960 292 1020 285 1010 270" fill="#222" />
        {clutter(945, 90, 70, 62, 75, 26)}
        {clutter(962, 50, 36, 45, 34, 36)}
        <path d="M968 55H985V90H968Z" fill="#888" />
        {clutter(968, 215, 30, 55, 22, 29)}
        <path d="M1028 135V268M1074 130V265M1028 205H1074M1028 250H1074" fill="none" strokeWidth="8" />
        <path d="M1028 130 1078 124V138L1028 142Z" fill="#333" />
        <path d="M1035 148H1065V198H1035Z" fill="#d0d0d0" />
        {clutter(1020, 85, 55, 42, 45, 27)}
        {clutter(1022, 48, 28, 40, 24, 37)}
        <path d="M1050 97 1075 92" strokeWidth="4" />
        {clutter(1035, 202, 32, 14, 16, 28)}
      </g>
      <ellipse cx="328.500" cy="752" rx="79" ry="48" fill="#0000ff" fillOpacity="0.1" stroke="#0000ff" strokeWidth="1.800" />
      <g fill="none" stroke="#ff0033" strokeWidth="1.800">
        <rect x="6" y="740" width="175.500" height="74" />
        <path d="M181 750.500H212V785.500H181" />
        <rect x="290" y="729" width="77" height="46" />
        <rect x="367.500" y="713.500" width="47.500" height="67.500" />
        <rect x="412" y="726.500" width="31.500" height="35.500" />
        <rect x="499.500" y="720.500" width="23" height="40" />
        <rect x="523.500" y="712" width="78" height="46" />
        <rect x="607.500" y="705.500" width="67.500" height="43" />
        <rect x="675.500" y="692.500" width="24.500" height="43" />
      </g>
    </svg>
  );
}

function Mistral() {
  return (
    <div className="flex w-[729px] shrink-0 flex-col">
      <Title>mistral-3D</Title>
      <div className="mt-[2px] h-[482px] shrink-0 rounded-[2px] border border-[#8a8988] bg-white">
        <Synoptic />
      </div>
      <Tabs
        active="mistral-3D"
        items={[["DoorResult", "w-[87px]"], ["mistral-3D", "w-[81px]"], ["DoorDebug", "w-[90px]"], ["DoorOutput", "w-[87px]"], ["MacroDescription", "w-[119px]"], ["Experiment Config", "w-[124px]"]]}
      />
    </div>
  );
}

/* ---------- limits dock ---------- */
const PANEL = "flex h-[427px] shrink-0 flex-col rounded-[3px] border border-[#8a8988] shadow-[inset_0_1px_0_#b5b4b2]";

function Limits() {
  const rows = ["mir_eh01_01_pitch_pos", "mir_eh01_01_pitch_neg", "mir_eh01_01_roll_pos", "mir_eh01_01_roll_neg", "mir_eh01_01_yaw_pos", "mir_eh01_01_yaw_neg", "lpap_Itlk_04"];
  return (
    <div className="flex w-[426px] shrink-0 flex-col">
      <Title>Limits_M4</Title>
      <div className={`ml-[8px] mt-[11px] w-[409px] ${PANEL}`}>
        <div className="mt-[93px] flex flex-col">
          {rows.map((r) => (
            <div key={r} className="flex h-[30px] items-center">
              <span className="w-[156px] pb-[1px] text-right tracking-[0.28px]">{r}</span>
              <DarkLed className="mb-[1px] ml-[75px] size-[23px]" />
            </div>
          ))}
          <div className="flex h-[30px] items-center">
            <span className="w-[156px] pb-[1px] text-right">lpap_Ena_04</span>
            <DarkLed className="mb-[1px] ml-[35px] size-[23px]" />
            <span className="mb-[1px] ml-[32px]"><Check /></span>
          </div>
        </div>
      </div>
      <div className="ml-[8px] mt-[11px] flex w-[409px] flex-1 justify-between">
        <PushButton>Reset</PushButton>
        <PushButton>Apply</PushButton>
      </div>
      <Tabs active="Limits_M4" items={[["PLC_Resets", "w-[94px]"], ["Limits_M1", "w-[81px]"], ["Limits_M2", "w-[82px]"], ["Limits_M4", "w-[79px]"]]} />
    </div>
  );
}

/* ---------- front end dock ---------- */
function FrontEnd() {
  return (
    <div className="flex w-[388px] shrink-0 flex-col">
      <Title>FE09</Title>
      <div className="flex">
        <div className="flex w-[190px] flex-col gap-[108px] pl-[9px] pt-[109px]">
          {["OPEN FE", "CLOSE FE", "RESET FE"].map((b) => (
            <PushButton key={b} className="h-[25px] w-[181px]">{b}</PushButton>
          ))}
        </div>
        <div className="flex flex-1 flex-col pl-[12px] pt-[23px]">
          <div className="flex h-[69px] items-center gap-[8px]"><DarkLed className="size-[69px]" /><span className="tracking-[0px]">FE close first valve</span></div>
          <div className="mt-[35px] flex h-[58px] items-center gap-[7px]"><DarkLed className="size-[58px]" /><span>FE controls disabled</span></div>
          {["FE interlock", "FE open", "BL ready"].map((n, i) => (
            <div key={n} className={`flex h-[82px] items-center gap-[8px] ${i ? "mt-[17px]" : "mt-[28px]"}`}><DarkLed className="ml-[2px] size-[81px]" /><span>{n}</span></div>
          ))}
        </div>
      </div>
    </div>
  );
}

/* ---------- locum dock ---------- */
function Locum() {
  const rows = [["Diag2_mesh", "-4.33138e-09"], ["es_mesh", "-2.22559e-10"], ["xs_right", "-1.7941e-09"], ["xs_left", "-2.26953e-10"], ["Range", "1e-05"]];
  return (
    <div className="flex w-[281px] shrink-0 flex-col">
      <Title>Locum3</Title>
      <div className={`ml-[9px] mt-[11px] w-[263px] ${PANEL}`}>
        <div className="mt-[138px] flex flex-col">
          {rows.map(([n, v]) => (
            <div key={n} className="flex h-[30px] items-center">
              <span className="w-[94px] pb-[1px] text-right tracking-[0.3px]">{n}</span>
              <div className="ml-[9px] flex h-[24px] w-[97px] items-center justify-end border-2 border-[#80ff80] bg-[#00ff00] pb-[1px] pr-[2px]">{v}</div>
            </div>
          ))}
        </div>
      </div>
      <div className="ml-[9px] mt-[11px] flex w-[263px] flex-1 justify-between">
        <PushButton>Reset</PushButton>
        <PushButton>Apply</PushButton>
      </div>
      <Tabs active="Locum3" items={[["Locum3", "w-[68px]"], ["AlbaE...", "w-[75px]"], ["Locum2", "w-[69px]"], ["Locum1", "w-[68px]"]]} />
    </div>
  );
}

/* ---------- right applet bar ---------- */
function Applets() {
  return (
    <div className="flex w-[76px] flex-col border-l border-[#a9a8a6]">
      <svg width="60" height="38" viewBox="0 0 60 38" className="ml-[7px] mt-[19px]">
        <rect width="60" height="38" fill="#032e57" />
        <path d="M15 18Q22 10 28 6L34 11Q24 12 15 18Z" fill="#8fa6bd" />
        <path d="M15 18Q20 13 26 11Q22 14 15 18ZM31 14Q38 13 43 19Q38 15.500 31 15Z" fill="#fff" />
        <text x="12" y="25" letterSpacing="2.600" className="text-[6px]" fill="#dfe7ef">ALBA</text>
        <text x="6" y="31.500" letterSpacing="0" fontFamily="Liberation Serif, serif" fontStyle="italic" className="text-[4.600px]" fill="#c7d3df">Synchrotron Light Facility</text>
      </svg>
      <Taurus className="ml-[13px] mt-[26px] h-[50px] w-[48px]" w={3.6} />
      <svg width="58" height="60" viewBox="0 0 58 60" className="ml-[8px] mt-[15px]">
        <ellipse cx="29" cy="53" rx="22" ry="5" fill="#aaa9a7" />
        <path d="M17.500 1H40.500L56.500 17V40L40.500 55.500H17.500L1.500 40V17Z" fill="url(#octa)" stroke="#8f0f0f" />
        <path d="M18 2.500H40L55 17.500V39.500L40 54H18L3 39.500V17.500Z" fill="none" stroke="#f08080" />
        <path d="M55 28Q35 28 22 53H40L55 39.500Z" fill="#b80000" opacity="0.6" />
        <path d="M17 16 41 40M41 16 17 40" stroke="#ff2020" strokeWidth="9" />
        <path d="M17 16 41 40M41 16 17 40" stroke="#f2f2f2" strokeWidth="7" />
      </svg>
      <svg width="60" height="60" viewBox="0 0 60 60" className="ml-[2px] mt-[6px]">
        <rect width="60" height="60" fill="#fff" />
        <rect width="58" height="58" fill="#999" />
        <rect x="2" y="2" width="56" height="56" fill="#000" />
        {[14, 24, 33, 42, 52].map((x) => <rect key={x} x={x} y="2" width="1" height="56" fill="#aaa" />)}
        {[6, 15, 25, 34, 44, 53].map((y) => <rect key={y} x="2" y={y} width="56" height="1" fill="#aaa" />)}
        <path d="M23 18H27V22L31 24V30L33 16 35 15V6H39V12L41 14V25L45 23V39L43 40L40 38V32L36 35 35 52H32L30 40 24 42V28Z" fill="#0000ff" />
      </svg>
    </div>
  );
}

export default function App() {
  return (
    <div className="flex h-[1080px] w-[1920px] flex-col overflow-hidden bg-[#e0dfde] font-['Liberation_Sans',Arial,sans-serif] text-[12px] leading-[15px] tracking-[0.2px] whitespace-nowrap text-[#111]">
      <Patterns />
      <Header />
      <div className="mt-px flex h-[963px] shrink-0">
        <div className="flex w-[1844px] shrink-0 flex-col">
          <div className="flex h-[432px] shrink-0">
            <Sequences />
            <VSplit className="w-[5px] pt-[143px]" dots="h-[138px] w-[3px]" />
            <Motors />
            <VSplit className="w-[6px] pt-[143px]" dots="h-[138px] w-[3px]" />
            <Trend />
          </div>
          <div className="flex h-[6px] shrink-0 items-center pl-[614px]">
            <Fill id="dot" className="h-[3px] w-[608px]" />
          </div>
          <div className="flex h-[525px] shrink-0">
            <Mistral />
            <VSplit className="w-[7px] pt-[175px]" dots="h-[173px] w-[3px]" />
            <Limits />
            <VSplit className="w-[6px] pt-[175px]" dots="h-[173px] w-[3px]" />
            <FrontEnd />
            <VSplit className="w-[7px] pt-[175px]" dots="h-[173px] w-[3px]" />
            <Locum />
          </div>
        </div>
        <Applets />
      </div>
      <div className="flex h-[30px] shrink-0">
        <div className="flex w-[614px] items-center pl-[6px]">ctbl09 is ready</div>
        <Fill id="dot" className="mt-[3px] h-[3px] w-[608px]" />
        <div className="ml-auto mt-[3px] flex h-[26px] w-[27px] items-center justify-center border-y border-l border-[#8a8988]"><GreenLed /></div>
      </div>
    </div>
  );
}
